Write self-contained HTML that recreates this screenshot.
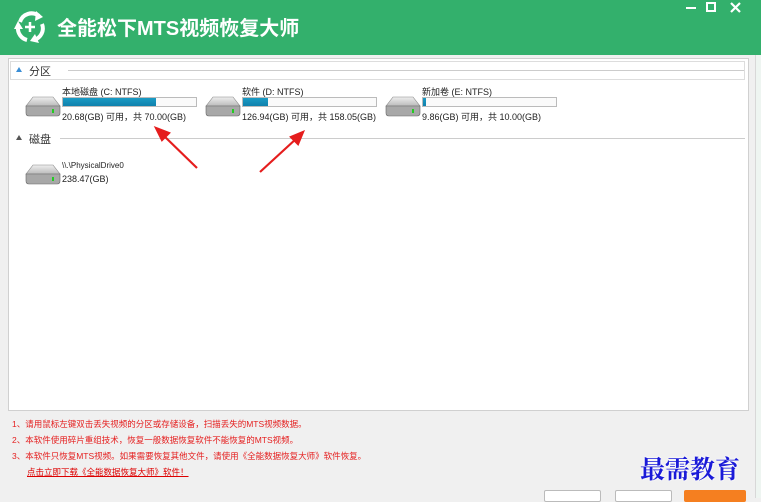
<!DOCTYPE html>
<html><head><meta charset="utf-8"><style>
*{margin:0;padding:0;box-sizing:border-box}
body{width:761px;height:498px;overflow:hidden;background:#f0f0f0;position:relative;font-family:"Liberation Sans","Noto Sans CJK SC",sans-serif;font-size:9px;color:#222}
.a{position:absolute}
.tb{left:0;top:0;width:761px;height:55px;background:#33b06c}
.title{left:57px;top:12px;color:#fff;font-size:20px;font-weight:bold}
.panel{left:8px;top:58px;width:741px;height:353px;background:#fff;border:1px solid #d0d0d0}
.hdr{font-size:11px;color:#333}
.bar{height:10px;border:1px solid #bbb;background:#fafafa}
.fill{height:100%;background:linear-gradient(#1a9bc4,#1081ad)}
.red{color:#e52020;font-size:8.5px}
.btn{top:490px;height:12px;border:1px solid #bbb;background:#fff;border-radius:2px}
</style></head><body>
<div class="a tb"></div>
<svg class="a" style="left:12px;top:9px" width="36" height="36" viewBox="0 0 36 36">
<path d="M8 13 A12 12 0 0 1 27 7" stroke="#fff" stroke-width="4" fill="none"/><path d="M24 2 L31 8 L23 12Z" fill="#fff"/>
<path d="M30 15 A12 12 0 0 1 22 31" stroke="#fff" stroke-width="4" fill="none"/><path d="M27 34 L18 32 L23 25Z" fill="#fff"/>
<path d="M15 31 A12 12 0 0 1 6 18" stroke="#fff" stroke-width="4" fill="none"/><path d="M2 20 L6 12 L11 20Z" fill="#fff"/>
<path d="M18 13V23M13 18H23" stroke="#fff" stroke-width="2.5"/></svg>
<div class="a title">全能松下MTS视频恢复大师</div>
<div class="a" style="left:686px;top:7px;width:10px;height:2px;background:#fff"></div>
<div class="a" style="left:706px;top:2px;width:10px;height:10px;border:2px solid #fff"></div>
<svg class="a" style="left:730px;top:2px" width="11" height="11"><path d="M1 1L10 10M10 1L1 10" stroke="#fff" stroke-width="2.2"/></svg>
<div class="a" style="left:755px;top:55px;width:6px;height:443px;background:#eef5f1;border-left:1px solid #d8d8d8"></div>
<div class="a panel"></div>
<div class="a" style="left:10px;top:61px;width:735px;height:19px;border:1px solid #ddd;background:#fff"></div>
<div class="a" style="left:16px;top:67px;width:0;height:0;border-left:3px solid transparent;border-right:3px solid transparent;border-bottom:5px solid #3a8ed6"></div>
<div class="a hdr" style="left:29px;top:63px">分区</div>
<div class="a" style="left:68px;top:70px;width:676px;height:1px;background:#ccc"></div>
<div class="a" style="left:16px;top:135px;width:0;height:0;border-left:3px solid transparent;border-right:3px solid transparent;border-bottom:5px solid #555"></div>
<div class="a hdr" style="left:29px;top:131px">磁盘</div>
<div class="a" style="left:60px;top:138px;width:685px;height:1px;background:#ccc"></div>

<svg width="0" height="0" style="position:absolute"><defs>
<linearGradient id="tg" x1="0" y1="0" x2="0" y2="1"><stop offset="0" stop-color="#eee"/><stop offset="1" stop-color="#bbb"/></linearGradient>
<g id="hd"><path d="M2 12 L9 3 H29 L36 12Z" fill="url(#tg)" stroke="#888" stroke-width=".6"/><path d="M2 12 H36 V19 Q36 22 33 22 H5 Q2 22 2 19Z" fill="#a8a8a8" stroke="#666" stroke-width=".6"/><rect x="28" y="15" width="2" height="4" fill="#2c2"/></g></defs></svg>
<svg class="a" style="left:24px;top:94px" width="38" height="24"><use href="#hd"/></svg>
<svg class="a" style="left:204px;top:94px" width="38" height="24"><use href="#hd"/></svg>
<svg class="a" style="left:384px;top:94px" width="38" height="24"><use href="#hd"/></svg>
<svg class="a" style="left:24px;top:162px" width="38" height="24"><use href="#hd"/></svg>

<div class="a" style="left:62px;top:85px">本地磁盘 (C: NTFS)</div>
<div class="a bar" style="left:62px;top:97px;width:135px"><div class="fill" style="width:70%"></div></div>
<div class="a" style="left:62px;top:110px">20.68(GB) 可用，共 70.00(GB)</div>
<div class="a" style="left:242px;top:85px">软件 (D: NTFS)</div>
<div class="a bar" style="left:242px;top:97px;width:135px"><div class="fill" style="width:19%"></div></div>
<div class="a" style="left:242px;top:110px">126.94(GB) 可用，共 158.05(GB)</div>
<div class="a" style="left:422px;top:85px">新加卷 (E: NTFS)</div>
<div class="a bar" style="left:422px;top:97px;width:135px"><div class="fill" style="width:2%"></div></div>
<div class="a" style="left:422px;top:110px">9.86(GB) 可用，共 10.00(GB)</div>
<div class="a" style="left:62px;top:161px;font-size:8px">\\.\PhysicalDrive0</div>
<div class="a" style="left:62px;top:174px">238.47(GB)</div>

<svg class="a" style="left:0;top:0" width="761" height="498"><g stroke="#e51d1d" stroke-width="2.2" fill="#e51d1d">
<line x1="197" y1="168" x2="162" y2="134"/><path d="M156 128 L169 133 L162 140Z"/>
<line x1="260" y1="172" x2="297" y2="138"/><path d="M303 132 L291 137 L298 144Z"/></g></svg>

<div class="a red" style="left:12px;top:418px">1、请用鼠标左键双击丢失视频的分区或存储设备，扫描丢失的MTS视频数据。</div>
<div class="a red" style="left:12px;top:434px">2、本软件使用碎片重组技术，恢复一般数据恢复软件不能恢复的MTS视频。</div>
<div class="a red" style="left:12px;top:450px">3、本软件只恢复MTS视频。如果需要恢复其他文件，请使用《全能数据恢复大师》软件恢复。</div>
<div class="a red" style="left:27px;top:466px;text-decoration:underline;color:#d00">点击立即下载《全能数据恢复大师》软件！</div>
<div class="a" style="left:640px;top:450px;font-family:'Noto Serif CJK SC',serif;font-weight:bold;font-size:25px;color:#1a1ad8;text-shadow:0 0 2px #fff,0 0 2px #fff">最需教育</div>
<div class="a btn" style="left:544px;width:57px"></div>
<div class="a btn" style="left:615px;width:57px"></div>
<div class="a btn" style="left:684px;width:62px;background:#f57f20;border-color:#f57f20"></div>
</body></html>
